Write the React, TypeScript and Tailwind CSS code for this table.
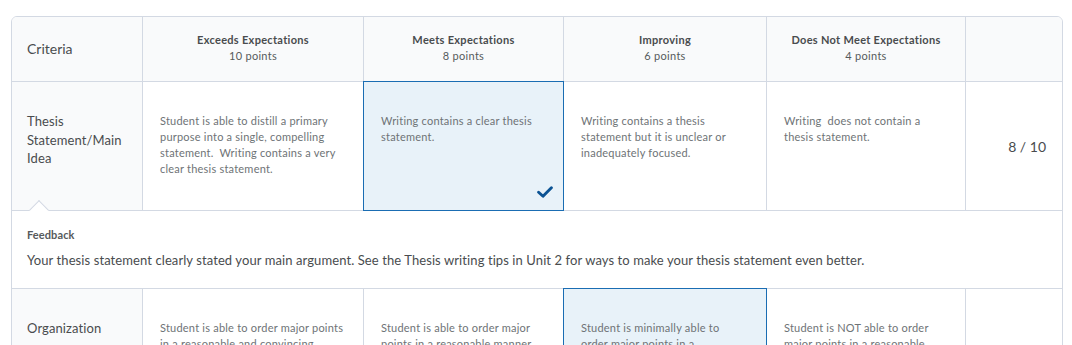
import React from "react";

type Level = { title: string; points: string };

const levels: Level[] = [
  { title: "Exceeds Expectations", points: "10 points" },
  { title: "Meets Expectations", points: "8 points" },
  { title: "Improving", points: "6 points" },
  { title: "Does Not Meet Expectations", points: "4 points" },
];

type Row = {
  name: string;
  cells: string[];
  selected: number;
  score: string;
  feedback?: string;
};

const rows: Row[] = [
  {
    name: "Thesis Statement/Main Idea",
    cells: [
      "Student is able to distill a primary purpose into a single, compelling statement.  Writing contains a very clear thesis statement.",
      "Writing contains a clear thesis statement.",
      "Writing contains a thesis statement but it is unclear or inadequately focused.",
      "Writing  does not contain a thesis statement.",
    ],
    selected: 1,
    score: "8 / 10",
    feedback:
      "Your thesis statement clearly stated your main argument. See the Thesis writing tips in Unit 2 for ways to make your thesis statement even better.",
  },
  {
    name: "Organization",
    cells: [
      "Student is able to order major points in a reasonable and convincing manner based on the thesis.",
      "Student is able to order major points in a reasonable manner based on the thesis.",
      "Student is minimally able to order major points in a reasonable manner.",
      "Student is NOT able to order major points in a reasonable manner.",
    ],
    selected: 2,
    score: "6 / 10",
  },
];

const cols = "grid grid-cols-[131px_221px_200px_203px_199px_96px]";

// the Improving column wraps a bit earlier in the original
const padRight = ["pr-4", "pr-4", "pr-5", "pr-4"];

const Check = () => (
  <svg width="16" height="12" viewBox="0 0 16 12" className="absolute right-[10px] bottom-[12px]">
    <polyline
      points="1.6,6.2 6,10.2 14.4,1.8"
      fill="none"
      stroke="#0b5394"
      strokeWidth="2.9"
      strokeLinecap="round"
      strokeLinejoin="round"
    />
  </svg>
);

const CriterionRow: React.FC<{ row: Row }> = ({ row }) => (
  <>
    <div className={cols}>
      <div className="bg-[#f9fafb] border-r border-b border-[#d3d9e3] h-[129px] pl-[15px] pr-3 pt-[30px] text-[13px] leading-[18.5px] tracking-[0.1px] text-[#494c4e]">
        {row.name}
      </div>
      {row.cells.map((c, i) => (
        <div
          key={i}
          className={
            "relative border-r border-b border-[#d3d9e3] pl-[17px] pt-[31px] text-[11px] leading-[16px] tracking-[0.22px] text-[#6e7376] " +
            padRight[i] +
            " " +
            (i === row.selected ? "bg-[#e8f2f9]" : "bg-white")
          }
        >
          {i === row.selected && (
            <div className="absolute -inset-px border border-[#1a6db3] pointer-events-none" />
          )}
          <span className="relative whitespace-pre-wrap">{c}</span>
          {i === row.selected && <Check />}
        </div>
      ))}
      <div className="border-b border-[#d3d9e3] flex items-center justify-end pr-[16px] text-[14px] text-[#494c4e]">
        {row.score}
      </div>
    </div>
    {row.feedback && (
      <div className="relative border-b border-[#d3d9e3] bg-white h-[78px] pl-[15px] pt-[16px]">
        <div className="absolute left-[20px] -top-[8px] w-[14px] h-[14px] rotate-45 bg-white border-l border-t border-[#d3d9e3]" />
        <div className="relative text-[11px] leading-[16px] font-bold tracking-[0.1px] text-[#565a5c]">Feedback</div>
        <div className="relative mt-[7px] text-[13px] leading-[20px] tracking-[0.09px] text-[#494c4e]">{row.feedback}</div>
      </div>
    )}
  </>
);

export default function App() {
  return (
    <div className="min-h-screen bg-white pl-[11px] pt-[16px] font-['Lato',sans-serif]">
      <div className="w-[1052px] border border-[#d3d9e3] rounded-t-[6px] overflow-hidden">
        <div className={cols + " bg-[#f9fafb]"}>
          <div className="border-r border-b border-[#d3d9e3] h-[65px] flex items-center pl-[15px] pb-[2px] text-[14px] text-[#494c4e]">
            Criteria
          </div>
          {levels.map((l) => (
            <div
              key={l.title}
              className="border-r border-b border-[#d3d9e3] flex flex-col items-center justify-center pb-[2px] text-[11px] leading-[16px] tracking-[0.3px] text-[#494c4e]"
            >
              <div className="font-bold">{l.title}</div>
              <div className="text-[#565a5c]">{l.points}</div>
            </div>
          ))}
          <div className="border-b border-[#d3d9e3]" />
        </div>
        {rows.map((r) => (
          <CriterionRow key={r.name} row={r} />
        ))}
      </div>
    </div>
  );
}
